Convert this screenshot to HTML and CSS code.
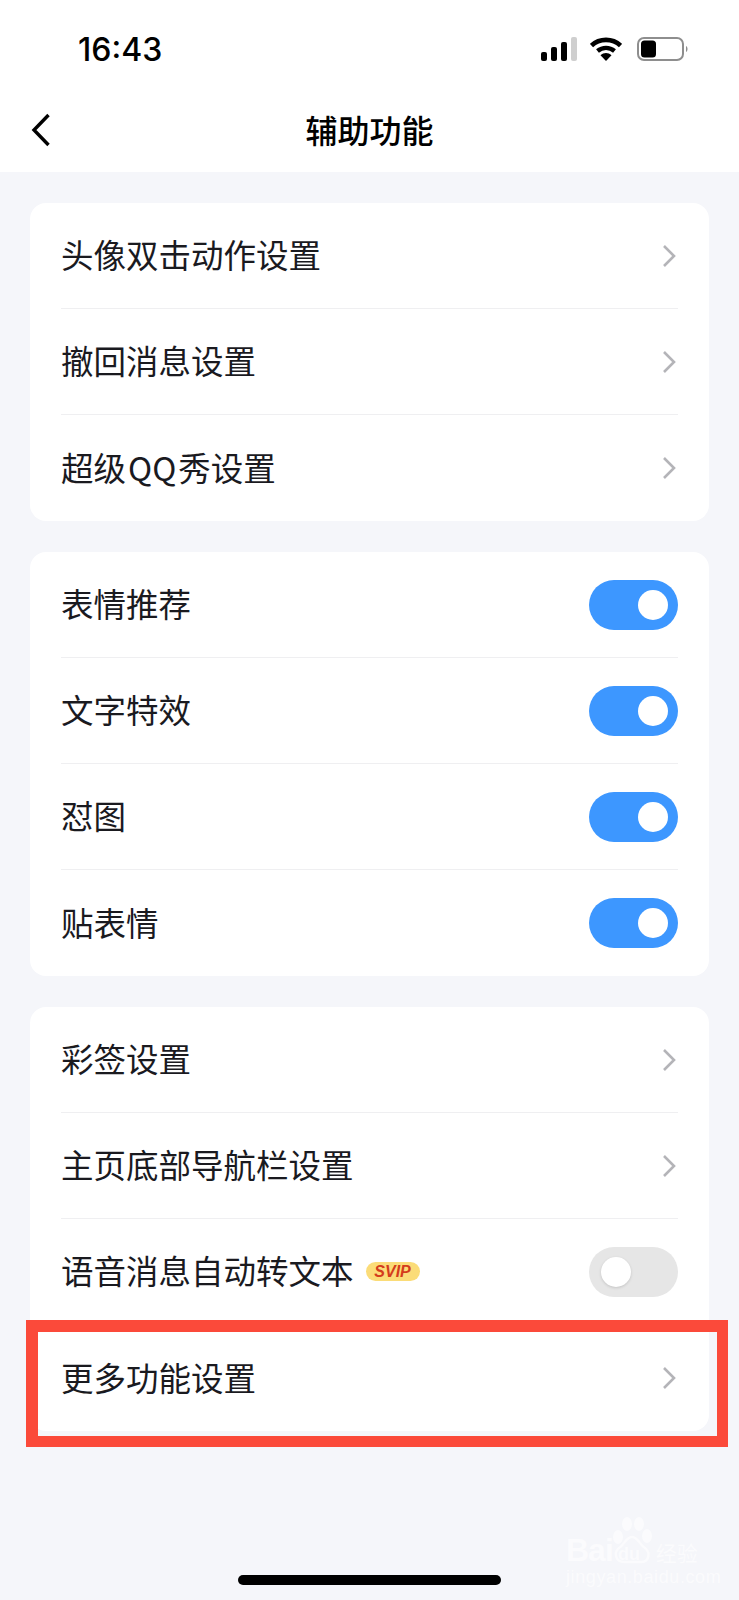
FILE: index.html
```html
<!DOCTYPE html>
<html lang="zh-CN">
<head>
    <meta charset="UTF-8">
    <meta name="viewport" content="width=device-width, initial-scale=1.0">
    <title>辅助功能</title>
    <link rel="stylesheet" href="styles.css">
</head>
<body>
    <div class="page">
        <header class="top">
            <div class="status-bar">
                <span class="time">16:43</span>
                <div class="status-icons">
                    <svg class="signal" width="36" height="24" viewBox="0 0 36 24">
                        <rect x="0" y="15" width="6" height="9" rx="2" fill="#000"/>
                        <rect x="10" y="10" width="6" height="14" rx="2" fill="#000"/>
                        <rect x="20" y="5" width="6" height="19" rx="2" fill="#000"/>
                        <rect x="30" y="0" width="6" height="24" rx="2" fill="#cfcfcf"/>
                    </svg>
                    <svg class="wifi" width="32" height="24" viewBox="0 0 32 24">
                        <path d="M1.5 8.5C9.5 1 22.5 1 30.500 8.500" fill="none" stroke="#000" stroke-width="4.600"/>
                        <path d="M7.500 14C12.500 9.800 19.500 9.800 24.500 14" fill="none" stroke="#000" stroke-width="4.400"/>
                        <path d="M10.500 18.300C13.800 15.300 18.200 15.300 21.500 18.300L16 24Z" fill="#000"/>
                    </svg>
                    <svg class="battery" width="52" height="24" viewBox="0 0 52 24">
                        <rect x="1" y="1" width="45" height="22" rx="6" fill="none" stroke="#8e8e8e" stroke-width="2"/>
                        <rect x="4" y="3.500" width="15" height="17" rx="3.500" fill="#000"/>
                        <path d="M49 9C51 10 51 14 49 15Z" fill="#8e8e8e"/>
                    </svg>
                </div>
            </div>
            <nav class="nav-bar">
                <svg class="back" width="20" height="34" viewBox="0 0 20 34">
                    <path d="M17.500 2L3 17L17.500 32" fill="none" stroke="#000" stroke-width="3.400"/>
                </svg>
                <h1>辅助功能</h1>
            </nav>
        </header>

        <main class="content">
            <section class="card">
                <div class="row"><span>头像双击动作设置</span><svg class="arrow" width="14" height="24" viewBox="0 0 14 24"><path d="M2 2L12 12L2 22"/></svg></div>
                <div class="row"><span>撤回消息设置</span><svg class="arrow" width="14" height="24" viewBox="0 0 14 24"><path d="M2 2L12 12L2 22"/></svg></div>
                <div class="row"><span>超级&#8202;QQ&#8202;秀设置</span><svg class="arrow" width="14" height="24" viewBox="0 0 14 24"><path d="M2 2L12 12L2 22"/></svg></div>
            </section>

            <section class="card">
                <div class="row"><span>表情推荐</span><div class="switch on"><i></i></div></div>
                <div class="row"><span>文字特效</span><div class="switch on"><i></i></div></div>
                <div class="row"><span>怼图</span><div class="switch on"><i></i></div></div>
                <div class="row"><span>贴表情</span><div class="switch on"><i></i></div></div>
            </section>

            <section class="card">
                <div class="row"><span>彩签设置</span><svg class="arrow" width="14" height="24" viewBox="0 0 14 24"><path d="M2 2L12 12L2 22"/></svg></div>
                <div class="row"><span>主页底部导航栏设置</span><svg class="arrow" width="14" height="24" viewBox="0 0 14 24"><path d="M2 2L12 12L2 22"/></svg></div>
                <div class="row">
                    <div class="label-group"><span>语音消息自动转文本</span><em class="svip">SVIP</em></div>
                    <div class="switch"><i></i></div>
                </div>
                <div class="row"><span>更多功能设置</span><svg class="arrow" width="14" height="24" viewBox="0 0 14 24"><path d="M2 2L12 12L2 22"/></svg></div>
            </section>
        </main>

        <div class="home-bar"></div>

        <!-- red box drawn over the last row -->
        <div class="highlight"></div>

        <div class="watermark">
            <div class="wm-logo">
                <span class="wm-bai">Bai</span>
                <svg class="wm-paw" width="44" height="50" viewBox="0 0 44 50">
                    <ellipse cx="8" cy="22" rx="5" ry="7" fill="#fff"/>
                    <ellipse cx="17" cy="9" rx="5" ry="7" fill="#fff"/>
                    <ellipse cx="29" cy="9" rx="5" ry="7" fill="#fff"/>
                    <ellipse cx="37" cy="21" rx="5" ry="7" fill="#fff"/>
                    <path d="M22 22C16 22 15 29 9 33C3 38 6 47 14 47H31C39 47 41 38 35 33C29 29 28 22 22 22Z" fill="none" stroke="#fff" stroke-width="2.500"/>
                </svg>
                <span class="wm-du">du</span>
                <span class="wm-cn">经验</span>
            </div>
            <div class="wm-url">jingyan.baidu.com</div>
        </div>
    </div>
</body>
</html>
```

FILE: styles.css
```css
* {
    box-sizing: border-box;
}
body {
    margin: 0;
    padding: 0;
    background-color: #f5f6fa;
    color: #1a1a1f;
    font-family: "Noto Sans CJK SC", "Noto Sans", sans-serif;
}
.page {
    position: relative;
    display: flex;
    flex-direction: column;
    height: 1600px;
    overflow: hidden;
}
.top {
    background: #fff;
    height: 172px;
}
.status-bar {
    display: flex;
    justify-content: space-between;
    align-items: center;
    height: 98px;
    padding: 0 50px 0 78px;
}
.time {
    font-family: Inter, Roboto, sans-serif;
    font-size: 32px;
    font-weight: 500;
    color: #000;
}
.status-icons {
    display: flex;
    align-items: center;
    gap: 15px;
}
.signal {
    margin-right: -2px;
}
.nav-bar {
    position: relative;
    display: flex;
    justify-content: center;
    align-items: center;
    height: 64px;
}
.nav-bar h1 {
    margin: 0 0 2px;
    font-size: 32px;
    font-weight: 500;
    color: #000;
}
.back {
    position: absolute;
    left: 31px;
    top: 15px;
}
.content {
    flex: 1;
    display: flex;
    flex-direction: column;
    gap: 31px;
    padding: 31px 30px 0;
}
.card {
    background: #fff;
    border-radius: 16px;
    width: 679px;
}
.row {
    display: flex;
    justify-content: space-between;
    align-items: center;
    height: 106px;
    margin: 0 31px;
    border-bottom: 1px solid #efeff1;
    font-size: 32.500px;
}
.row:last-child {
    border-bottom: none;
}
.row > span,
.label-group {
    margin-bottom: 4px;
}
.arrow {
    margin-right: 2px;
}
.arrow path {
    fill: none;
    stroke: #b4b4b8;
    stroke-width: 2.600;
}
.label-group {
    display: flex;
    align-items: center;
    gap: 12px;
}
.svip {
    width: 54px;
    height: 19px;
    border-radius: 10px;
    background: #fbdc78;
    color: #d43c1c;
    font-family: "Liberation Sans", sans-serif;
    font-size: 16px;
    font-weight: 700;
    font-style: italic;
    line-height: 19px;
    text-align: center;
    margin-top: 4px;
}
.switch {
    display: flex;
    align-items: center;
    width: 89px;
    height: 50px;
    padding: 0 12px;
    border-radius: 25px;
    background: #e6e6e6;
}
.switch i {
    display: block;
    width: 30px;
    height: 30px;
    border-radius: 50%;
    background: #fff;
    box-shadow: 0 1px 3px rgba(0, 0, 0, 0.15);
}
.switch.on {
    justify-content: flex-end;
    padding: 0 10px;
    background: #3d97ff;
}
.switch.on i {
    box-shadow: none;
}
.home-bar {
    width: 263px;
    height: 10px;
    margin: 0 auto 15px;
    border-radius: 5px;
    background: #000;
}
.highlight {
    position: absolute;
    left: 26px;
    top: 1320px;
    width: 702px;
    height: 127px;
    border: solid #fb4a3a;
    border-width: 12px 11px 11px 12px;
}
.watermark {
    position: absolute;
    left: 566px;
    top: 1519px;
    width: 136px;
    color: #fff;
    font-family: "Liberation Sans", sans-serif;
    opacity: 0.6;
}
.wm-logo {
    display: flex;
    align-items: flex-end;
    height: 46px;
}
.wm-bai {
    font-size: 32px;
    font-weight: 700;
    line-height: 30px;
    letter-spacing: -1px;
}
.wm-paw {
    margin-left: -3px;
    flex-shrink: 0;
}
.wm-du {
    position: absolute;
    left: 52px;
    top: 26px;
    font-size: 18px;
    font-weight: 700;
    line-height: 18px;
}
.wm-cn {
    margin-left: 2px;
    font-family: "Noto Sans CJK SC", sans-serif;
    font-size: 21px;
    line-height: 26px;
    white-space: nowrap;
}
.wm-url {
    margin-top: 2px;
    font-size: 18px;
    letter-spacing: 0.600px;
    white-space: nowrap;
}
```
